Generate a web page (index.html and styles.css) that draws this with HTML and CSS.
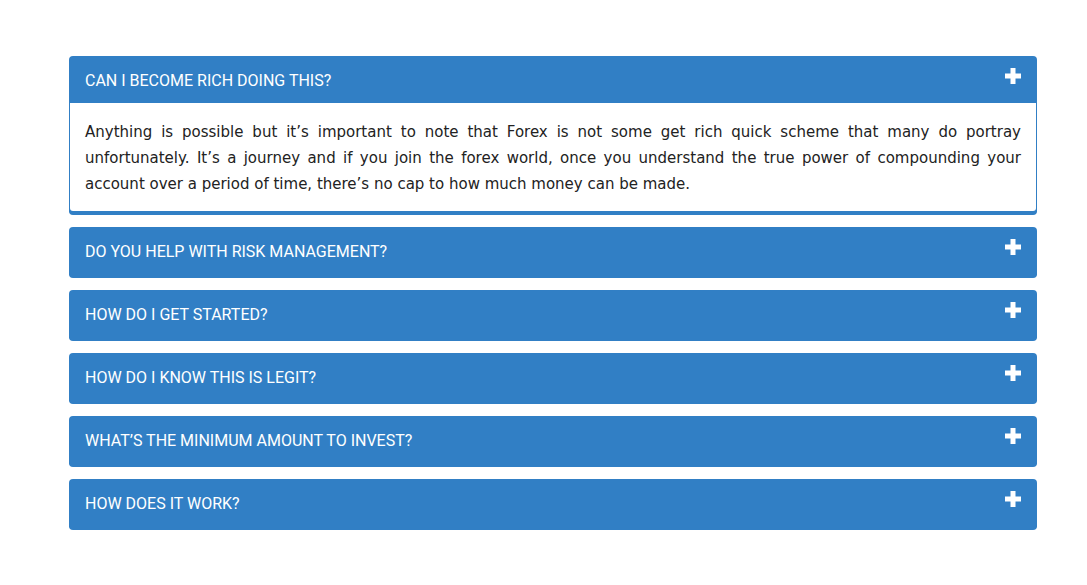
FILE: index.html
```html
<!DOCTYPE html>
<html>
<head>
<meta charset="utf-8">
<link rel="stylesheet" href="styles.css">
</head>
<body>
<div class="faq">
  <div class="panel open">
    <div class="head"><span class="title">CAN I BECOME RICH DOING THIS?</span><svg class="plus" viewBox="0 0 16 16"><path d="M5.5 0h5v5.5H16v5h-5.5V16h-5v-5.5H0v-5h5.5z"/></svg></div>
    <div class="body"><p>Anything is possible but it’s important to note that Forex is not some get rich quick scheme that many do portray unfortunately. It’s a journey and if you join the forex world, once you understand the true power of compounding your account over a period of time, there’s no cap to how much money can be made.</p></div>
  </div>
  <div class="panel">
    <div class="head"><span class="title">DO YOU HELP WITH RISK MANAGEMENT?</span><svg class="plus" viewBox="0 0 16 16"><path d="M5.5 0h5v5.5H16v5h-5.5V16h-5v-5.5H0v-5h5.5z"/></svg></div>
  </div>
  <div class="panel">
    <div class="head"><span class="title">HOW DO I GET STARTED?</span><svg class="plus" viewBox="0 0 16 16"><path d="M5.5 0h5v5.5H16v5h-5.5V16h-5v-5.5H0v-5h5.5z"/></svg></div>
  </div>
  <div class="panel">
    <div class="head"><span class="title">HOW DO I KNOW THIS IS LEGIT?</span><svg class="plus" viewBox="0 0 16 16"><path d="M5.5 0h5v5.5H16v5h-5.5V16h-5v-5.5H0v-5h5.5z"/></svg></div>
  </div>
  <div class="panel">
    <div class="head"><span class="title">WHAT’S THE MINIMUM AMOUNT TO INVEST?</span><svg class="plus" viewBox="0 0 16 16"><path d="M5.5 0h5v5.5H16v5h-5.5V16h-5v-5.5H0v-5h5.5z"/></svg></div>
  </div>
  <div class="panel">
    <div class="head"><span class="title">HOW DOES IT WORK?</span><svg class="plus" viewBox="0 0 16 16"><path d="M5.5 0h5v5.5H16v5h-5.5V16h-5v-5.5H0v-5h5.5z"/></svg></div>
  </div>
</div>
</body>
</html>
```
FILE: styles.css
```css
html, body {
  margin: 0;
  padding: 0;
  background: #fff;
}
.faq {
  width: 968px;
  margin: 56px 0 0 69px;
  display: flex;
  flex-direction: column;
  gap: 12px;
}
.panel {
  background: #317fc5;
  border-radius: 4px;
  border-bottom: 4px solid #317fc5;
  overflow: hidden;
}
.head {
  height: 47px;
  display: flex;
  align-items: center;
  justify-content: space-between;
  padding: 0 16px;
  color: #fff;
  font-family: Roboto, "Liberation Sans", sans-serif;
  font-size: 16px;
}
.title {
  padding-top: 1px;
}
.plus {
  width: 16px;
  height: 16px;
  fill: #fff;
  align-self: flex-start;
  margin-top: 12px;
}
.body {
  background: #fff;
  margin: 0 1px;
  border-radius: 0 0 3px 3px;
  padding: 16px 15px 14px;
}
.body p {
  margin: 0;
  font-family: Verdana, "DejaVu Sans", sans-serif;
  font-size: 15px;
  line-height: 26px;
  color: #222;
  text-align: justify;
}
```
